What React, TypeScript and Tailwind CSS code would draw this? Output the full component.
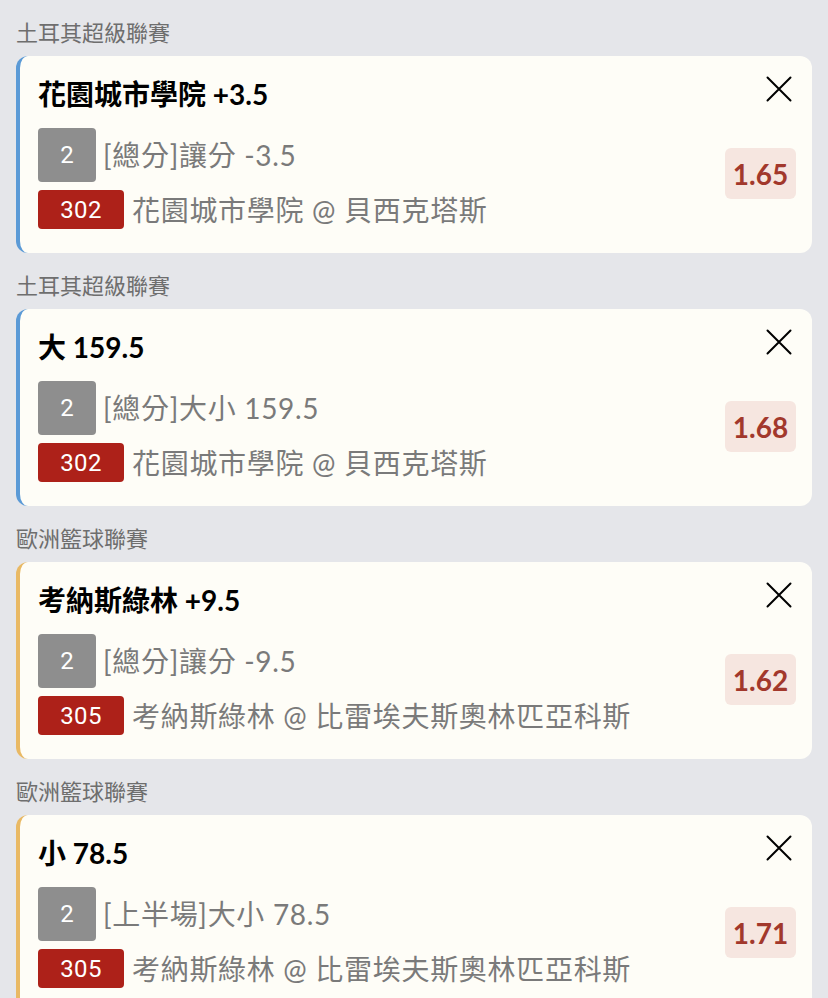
type Bet = {
  league: string;
  title: string;
  accent: 'blue' | 'yellow';
  num: string;
  market: string;
  code: string;
  match: string;
  odds: string;
};

const bets: Bet[] = [
  {
    league: '土耳其超級聯賽',
    title: '花園城市學院 +3.5',
    accent: 'blue',
    num: '2',
    market: '[總分]讓分 -3.5',
    code: '302',
    match: '花園城市學院 @ 貝西克塔斯',
    odds: '1.65',
  },
  {
    league: '土耳其超級聯賽',
    title: '大 159.5',
    accent: 'blue',
    num: '2',
    market: '[總分]大小 159.5',
    code: '302',
    match: '花園城市學院 @ 貝西克塔斯',
    odds: '1.68',
  },
  {
    league: '歐洲籃球聯賽',
    title: '考納斯綠林 +9.5',
    accent: 'yellow',
    num: '2',
    market: '[總分]讓分 -9.5',
    code: '305',
    match: '考納斯綠林 @ 比雷埃夫斯奧林匹亞科斯',
    odds: '1.62',
  },
  {
    league: '歐洲籃球聯賽',
    title: '小 78.5',
    accent: 'yellow',
    num: '2',
    market: '[上半場]大小 78.5',
    code: '305',
    match: '考納斯綠林 @ 比雷埃夫斯奧林匹亞科斯',
    odds: '1.71',
  },
];

const CloseIcon = () => (
  <svg width="26" height="26" viewBox="0 0 26 26" className="mr-1 text-black">
    <path d="M1.5 1.5L24.5 24.5M24.5 1.5L1.5 24.5" stroke="currentColor" strokeWidth="2" strokeLinecap="round" />
  </svg>
);

const BetCard = ({ bet }: { bet: Bet }) => {
  return (
    <div
      className={`flex rounded-xl border-l-4 bg-[#fefdf7] pt-5 pb-6 pl-[18px] pr-4 ${
        bet.accent === 'blue' ? 'border-[#5b9ad6]' : 'border-[#e9b964]'
      }`}
    >
      <div className="flex-1 min-w-0">
        <div className="text-[28px] leading-[36px] font-bold text-black">{bet.title}</div>
        <div className="mt-4 flex items-center">
          <div className="flex h-[54px] w-[58px] items-center justify-center rounded-[4px] bg-[#8e8e8e] font-['Roboto'] text-[24px] text-white">
            {bet.num}
          </div>
          <span className="ml-[7px] text-[28px] leading-[36px] tracking-[0.7px] text-[#7a7a7a]">{bet.market}</span>
        </div>
        <div className="mt-2 flex items-center">
          <div className="flex h-[39px] w-[86px] items-center justify-center rounded-[4px] bg-[#ad2119] font-['Roboto'] text-[24px] tracking-[0.3px] text-white">
            {bet.code}
          </div>
          <span className="ml-2 text-[28px] leading-[36px] tracking-[0.7px] text-[#7a7a7a]">{bet.match}</span>
        </div>
      </div>
      <div className="flex flex-col items-end">
        <CloseIcon />
        <div className="mt-[46px] flex h-[51px] w-[71px] items-center justify-center rounded-md bg-[#f6e6e0] text-[28px] font-bold text-[#a2382c]">
          {bet.odds}
        </div>
      </div>
    </div>
  );
};

const App = () => {
  return (
    <div className="min-h-screen bg-[#e5e6ea] px-4 font-['Lato','Noto_Sans_CJK_TC',sans-serif]">
      {bets.map((bet, index) => (
        <section key={index} className="pt-[17px]">
          <div className="mb-[7px] text-[22px] leading-[32px] text-[#6e6e6e]">{bet.league}</div>
          <BetCard bet={bet} />
        </section>
      ))}
    </div>
  );
};

export default App;
